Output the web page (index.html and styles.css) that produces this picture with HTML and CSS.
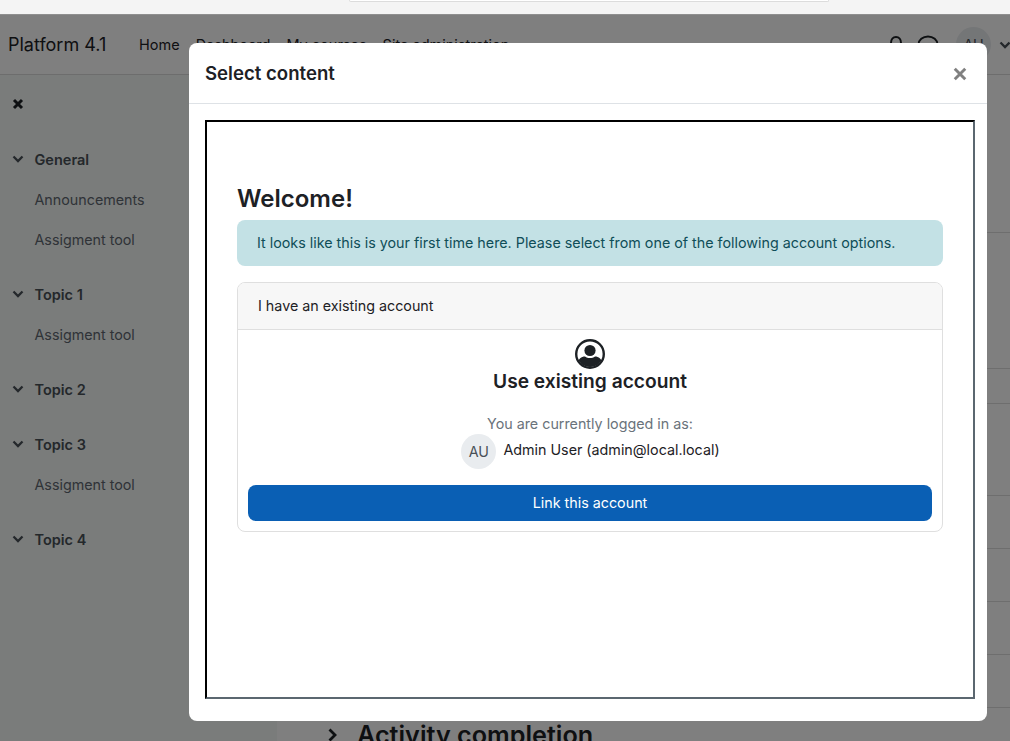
FILE: index.html
```html
<!DOCTYPE html>
<html lang="en">
<head>
<meta charset="utf-8">
<title>Select content</title>
<link rel="stylesheet" href="styles.css">
</head>
<body>
<div class="browser-bar"><div class="url-bar"></div></div>
<header class="navbar">
  <span class="brand">Platform 4.1</span>
  <nav class="nav-links">
    <a>Home</a><a>Dashboard</a><a>My courses</a><a>Site administration</a>
  </nav>
  <div class="nav-right">
    <svg class="nav-icon bell" viewBox="0 0 14 20"><path d="M7 2C4 2 2 4.500 2 8c0 3-1 5-1.500 6h13C13 13 12 11 12 8c0-3.500-2-6-5-6z" fill="none" stroke="currentColor" stroke-width="2"/></svg>
    <svg class="nav-icon chat" viewBox="0 0 22 20"><ellipse cx="11" cy="9.500" rx="9.500" ry="8" fill="none" stroke="currentColor" stroke-width="2"/></svg>
    <span class="nav-avatar">AU</span>
    <svg class="chev nav-chev" viewBox="0 0 12 8"><path d="M1.500 1.500 6 6l4.500-4.500" /></svg>
  </div>
</header>
<div class="layout">
  <aside class="sidebar">
    <svg class="side-close" viewBox="0 0 12 12"><path d="M2 2l8 8M10 2l-8 8"/></svg>
    <section class="sec">
      <div class="sec-title"><svg class="chev" viewBox="0 0 12 8"><path d="M1.500 1.500 6 6l4.500-4.500"/></svg>General</div>
      <div class="sec-item">Announcements</div>
      <div class="sec-item">Assigment tool</div>
    </section>
    <section class="sec">
      <div class="sec-title"><svg class="chev" viewBox="0 0 12 8"><path d="M1.500 1.500 6 6l4.500-4.500"/></svg>Topic 1</div>
      <div class="sec-item">Assigment tool</div>
    </section>
    <section class="sec">
      <div class="sec-title"><svg class="chev" viewBox="0 0 12 8"><path d="M1.500 1.500 6 6l4.500-4.500"/></svg>Topic 2</div>
    </section>
    <section class="sec">
      <div class="sec-title"><svg class="chev" viewBox="0 0 12 8"><path d="M1.500 1.500 6 6l4.500-4.500"/></svg>Topic 3</div>
      <div class="sec-item">Assigment tool</div>
    </section>
    <section class="sec">
      <div class="sec-title"><svg class="chev" viewBox="0 0 12 8"><path d="M1.500 1.500 6 6l4.500-4.500"/></svg>Topic 4</div>
    </section>
  </aside>
  <main class="main">
    <div class="row r1"></div>
    <div class="row r2"></div>
    <div class="row r3"></div>
    <div class="row r4"></div>
    <div class="row r5"></div>
    <div class="row r5"></div>
    <div class="row r5"></div>
    <div class="row r5"></div>
    <h2 class="activity"><svg class="chev-right" viewBox="0 0 9 14"><path d="M1.500 1.500 7 7l-5.500 5.500"/></svg>Activity completion</h2>
  </main>
</div>
<div class="backdrop"></div>
<div class="modal">
  <div class="modal-head">
    <h5 class="modal-title">Select content</h5>
    <svg class="modal-close" viewBox="0 0 12 12"><path d="M1.500 1.500l9 9M10.500 1.500l-9 9"/></svg>
  </div>
  <div class="modal-body">
    <div class="frame">
      <h1 class="welcome">Welcome!</h1>
      <div class="alert">It looks like this is your first time here. Please select from one of the following account options.</div>
      <div class="card">
        <div class="card-head">I have an existing account</div>
        <div class="card-body">
          <svg class="user-icon" viewBox="0 0 30 30">
            <defs><clipPath id="c"><circle cx="15" cy="15" r="13"/></clipPath></defs>
            <circle cx="15" cy="15" r="13.800" fill="#fff" stroke="#1d2125" stroke-width="2.400"/>
            <circle cx="15" cy="11.500" r="5.600" fill="#1d2125"/>
            <path clip-path="url(#c)" d="M3 30v-6c0-4 3.500-6.500 7-6.500 1.500 1 3 1.500 5 1.500s3.500-.5 5-1.500c3.500 0 7 2.500 7 6.500v6z" fill="#1d2125"/>
          </svg>
          <h3 class="use-title">Use existing account</h3>
          <p class="logged">You are currently logged in as:</p>
          <div class="user-line"><span class="avatar">AU</span><span class="user-name">Admin User (admin@local.local)</span></div>
          <button class="btn">Link this account</button>
        </div>
      </div>
    </div>
  </div>
</div>
</body>
</html>
```
FILE: styles.css
```css
* { box-sizing: border-box; }
html, body { margin: 0; height: 741px; overflow: hidden; }
body { font-family: "Inter", "Liberation Sans", sans-serif; font-size: 14.300px; color: #1d2125; background: #fff; }

.browser-bar { height: 15px; background: #f4f4f4; border-bottom: 1px solid #8f8f8f; position: relative; z-index: 5; display: flex; justify-content: center; }
.url-bar { width: 480px; height: 2px; background: #fff; border: 1px solid #dcdcdc; border-top: 0; border-radius: 0 0 6px 6px; margin-left: 168px; }

.navbar { height: 60px; display: flex; align-items: center; padding-left: 8px; background: #fff; border-bottom: 1px solid #dadada; color: #1d2125; }
.brand { font-size: 18px; width: 131px; }
.nav-links { display: flex; gap: 16px; font-size: 14.500px; }
.nav-right { margin-left: auto; display: flex; align-items: center; }
.nav-icon { color: #1d2125; display: block; }
.bell { width: 14px; height: 20px; margin-right: 14px; }
.chat { width: 22px; height: 20px; margin-right: 17px; }
.nav-avatar { width: 35px; height: 35px; border-radius: 50%; background: #e9ecef; display: flex; align-items: center; justify-content: center; color: #495057; }
.nav-chev { margin: 0 -1px 0 8px; }

.chev { width: 12px; height: 8px; display: block; flex: none; fill: none; stroke: #495057; stroke-width: 2.300; }

.layout { display: flex; height: 666px; }
.sidebar { width: 277px; flex: none; background: #f4f8f6; padding: 23px 0 0 12px; }
.side-close { display: block; width: 12px; height: 12px; margin-bottom: 29px; fill: none; stroke: #1d2125; stroke-width: 3; }
.sec { margin-bottom: 15px; }
.sec-title { height: 40px; display: flex; align-items: center; gap: 10.500px; font-size: 14.500px; font-weight: 600; color: #495057; }
.sec-item { height: 40px; display: flex; align-items: center; padding-left: 22.500px; color: #5f6770; }

.main { flex: 1; padding-left: 23px; min-width: 0; }
.row { border-bottom: 1px solid #dcdcdc; }
.r1 { height: 158px; }
.r2 { height: 136px; }
.r3 { height: 35px; }
.r4 { height: 92px; }
.r5 { height: 53px; }
.activity { margin: 12px 0 0 28px; display: flex; align-items: center; gap: 20px; font-size: 25.200px; font-weight: 600; color: #1d2125; line-height: 30px; white-space: nowrap; }
.chev-right { width: 9px; height: 14px; flex: none; fill: none; stroke: #1d2125; stroke-width: 2.800; }

.backdrop { position: absolute; left: 0; right: 0; top: 15px; bottom: 0; background: rgba(0, 0, 0, .5); }

.modal { position: absolute; left: 189px; top: 43px; width: 798px; height: 678px; background: #fff; border-radius: 8px; display: flex; flex-direction: column; z-index: 3; }
.modal-head { height: 61px; flex: none; border-bottom: 1px solid #dee2e6; display: flex; align-items: center; justify-content: space-between; padding: 0 20px 0 16px; }
.modal-title { margin: 0; font-size: 18.600px; font-weight: 600; color: #1d2125; }
.modal-close { width: 14px; height: 14px; margin-top: 2px; fill: none; stroke: #808080; stroke-width: 2.500; }
.modal-body { flex: 1; padding: 16px 12px 22px 16px; display: flex; }
.frame { flex: 1; border: 2px solid; border-color: #000 #5b6770 #5b6770 #000; padding: 62px 30px 0 30px; }
.welcome { margin: 0 0 6px; font-size: 24px; font-weight: 600; line-height: 30px; color: #1d2125; }
.alert { height: 46px; padding: 0 20px 2px; background: #c3e1e5; color: #0f4e58; border-radius: 8px; display: flex; align-items: center; }
.card { margin-top: 16px; border: 1px solid #dfdfdf; border-radius: 8px; height: 250px; overflow: hidden; }
.card-head { height: 47px; background: #f7f7f7; border-bottom: 1px solid #dfdfdf; display: flex; align-items: center; padding: 0 0 2px 20px; color: #1d2125; }
.card-body { padding: 9px 10px 0; display: flex; flex-direction: column; align-items: center; }
.user-icon { width: 30px; height: 30px; display: block; }
.use-title { margin: 0; font-size: 19.200px; font-weight: 600; line-height: 25px; color: #1d2125; }
.logged { margin: 20px 0 0; color: #6a737b; line-height: 20px; }
.user-line { display: flex; align-items: flex-start; }
.avatar { width: 35px; height: 35px; border-radius: 50%; background: #e9ecef; color: #495057; display: flex; align-items: center; justify-content: center; margin: 0 7px 0 1px; }
.user-name { line-height: 24px; margin-top: 4px; color: #1d2125; }
.btn { align-self: stretch; height: 36px; padding: 0 0 2px; margin-top: 16px; border: 0; border-radius: 8px; background: #0a5fb4; color: #fff; font: 14.300px "Inter", "Liberation Sans", sans-serif; }
```
